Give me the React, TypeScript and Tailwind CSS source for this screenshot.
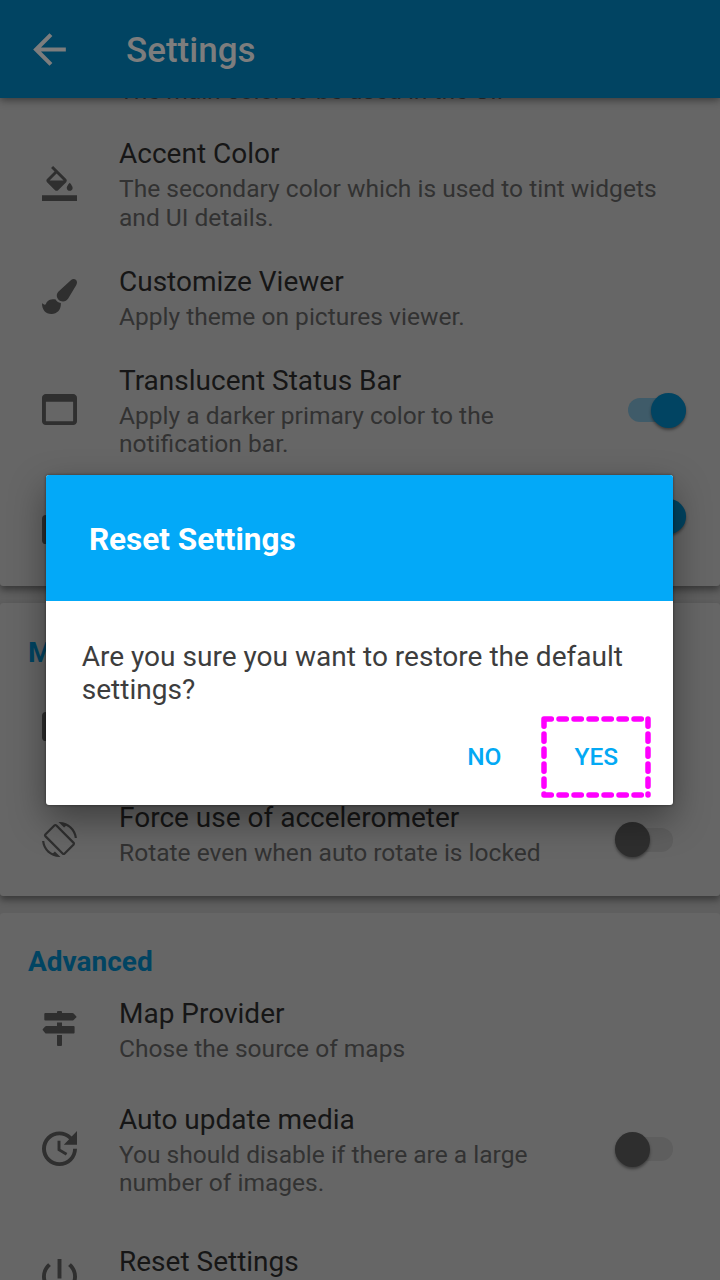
import React from "react";
import type { ReactNode } from "react";
import { MdArrowBack } from "react-icons/md";

function Glyph({ box, className, children }: { box: string; className: string; children: ReactNode }) {
  return (
    <svg viewBox={box} preserveAspectRatio="none" fill="currentColor" className={"block text-[#2f2f2f] " + className}>
      {children}
    </svg>
  );
}

const FillIcon = () => (
  <Glyph box="0 0 24 24" className="h-[35px] w-[35px]">
    <path d="M16.56 8.94L7.62 0 6.21 1.41l2.38 2.38-5.15 5.15c-.59.59-.59 1.54 0 2.12l5.5 5.5c.29.29.68.44 1.06.44s.77-.15 1.06-.44l5.5-5.5c.59-.58.59-1.53 0-2.12zM5.21 10L10 5.21 14.79 10H5.21zM19 11.5s-2 2.17-2 3.5c0 1.1.9 2 2 2s2-.9 2-2c0-1.33-2-3.5-2-3.5zM0 20h24v4H0z" />
  </Glyph>
);
const BrushIcon = () => (
  <Glyph box="0 0 35 35" className="mb-[2px] h-[35px] w-[35px]">
    <path d="M31.6 0C33.6 0 35 1.5 35 3.4c0 1-.5 2-1 3L26.2 19.600c-1.500 2-3 2.900-5.200 2.900-3.500 0-6.200-2.500-6.200-5.900 0-1.700.700-3.200 2.300-4.600L29.100 1c.8-.6 1.600-1 2.500-1zM13.700 20.400c.8 1.700 2.400 3.100 5.100 3.500l.1.900C18.900 31 15 35 9.600 35 3.200 35 0 30.300 0 24.200c.4.300 2 1.500 2.700 1.500.6 0 1-.3 1.200-.8 1.300-3.400 4.100-4.600 8.200-4.600z" />
  </Glyph>
);
const WindowIcon = () => (
  <Glyph box="3 4 18 16" className="h-[31px] w-[35px]">
    <path d="M19 4H5c-1.110 0-2 .9-2 2v12c0 1.100.89 2 2 2h14c1.100 0 2-.9 2-2V6c0-1.100-.89-2-2-2zm0 14H5V8h14v10z" />
  </Glyph>
);
const PanelIcon = () => (
  <Glyph box="0 0 35 30" className="h-[29px] w-[35px]">
    <path fillRule="evenodd" d="M4 0h27a4 4 0 0 1 4 4v22a4 4 0 0 1-4 4H4a4 4 0 0 1-4-4V4a4 4 0 0 1 4-4zm0 4v22h27V4z" />
  </Glyph>
);
const RotateIcon = () => (
  <Glyph box="0 0 24 24" className="mt-[12px] h-[35px] w-[35px]">
    <path d="M16.48 2.520c3.270 1.550 5.610 4.720 5.970 8.480h1.500C23.440 4.840 18.290 0 12 0l-.66.030 3.810 3.810 1.330-1.320zm-6.250-.770c-.59-.59-1.540-.59-2.120 0L1.750 8.110c-.59.59-.59 1.540 0 2.120l12.020 12.020c.59.59 1.540.59 2.120 0l6.360-6.360c.59-.59.59-1.540 0-2.120L10.230 1.750zm4.600 19.440L2.810 9.170l6.360-6.360 12.020 12.020-6.360 6.360zm-7.310.29C4.250 19.940 1.910 16.760 1.550 13H.05C.56 19.160 5.710 24 12 24l.66-.03-3.810-3.810-1.330 1.320z" />
  </Glyph>
);
const SignsIcon = () => (
  <Glyph box="0 0 35 35" className="mb-[2px] h-[35px] w-[35px]">
    <path d="M15 2V1q0-1 1-1h3q1 0 1 1v1h10.300q.8 0 1.300.6l2.600 2.700q.5.600 0 1.200L31.600 9q-.5.600-1.300.6H3.300q-1 0-1-1V3.200q0-1.200 1-1.200zM15 11.500h5V15h11.600q1 0 1 1v5.500q0 1-1 1H4.400q-.8 0-1.300-.6L.9 19.300q-.5-.600 0-1.200l2.200-2.500q.5-.6 1.300-.6H15zM15 24h5v10q0 1-1 1h-3q-1 0-1-1z" />
  </Glyph>
);
const UpdateIcon = () => (
  <Glyph box="3 3 18 18" className="h-[35px] w-[35px]">
    <path d="M21 10.120h-6.780l2.740-2.820c-2.730-2.700-7.150-2.800-9.880-.100-2.730 2.710-2.730 7.080 0 9.790s7.150 2.710 9.880 0C18.320 15.650 19 14.080 19 12.100h2c0 1.980-.88 4.550-2.640 6.290-3.510 3.480-9.210 3.480-12.720 0-3.500-3.470-3.530-9.110-.020-12.580s9.140-3.470 12.650 0L21 3v7.120zM12.500 8v4.250l3.500 2.080-.72 1.210L11 13V8h1.500z" />
  </Glyph>
);
const PowerIcon = () => (
  <Glyph box="3 3 18 18" className="h-[35px] w-[35px]">
    <path d="M13 3h-2v10h2V3zm4.830 2.170l-1.420 1.420C17.990 7.860 19 9.810 19 12c0 3.870-3.130 7-7 7s-7-3.130-7-7c0-2.190 1.010-4.140 2.580-5.420L6.170 5.170C4.230 6.820 3 9.260 3 12c0 4.970 4.030 9 9 9s9-4.030 9-9c0-2.740-1.230-5.180-3.170-6.830z" />
  </Glyph>
);

function Toggle({ on }: { on?: boolean }) {
  return on ? (
    <div className="mr-[34px] flex h-6 w-[58px] items-center justify-end rounded-full bg-[#3f5b69]">
      <div className="size-[35px] shrink-0 rounded-full bg-[#014462] shadow-[0_2px_3px_rgba(0,0,0,0.4)]" />
    </div>
  ) : (
    <div className="mr-[47px] flex h-6 w-[58px] items-center rounded-full bg-[#5e5e5e]">
      <div className="size-[35px] shrink-0 rounded-full bg-[#2e2e2e] shadow-[0_2px_3px_rgba(0,0,0,0.4)]" />
    </div>
  );
}

type RowProps = { icon: ReactNode; title: string; lines: string[]; className: string; toggle?: ReactNode };

function Row({ icon, title, lines, className, toggle }: RowProps) {
  return (
    <div className={"flex shrink-0 items-center " + className}>
      <div className="flex w-[119px] shrink-0 justify-center pb-[3px]">{icon}</div>
      <div className="flex-1 whitespace-nowrap">
        <div className="text-[28px] leading-[33px] text-[#161616]">{title}</div>
        <div className="mt-[5px] text-[24.550px] leading-[28.500px] text-[#323232]">
          {lines.map((l) => (
            <div key={l}>{l}</div>
          ))}
        </div>
      </div>
      {toggle && <div className="shrink-0 pb-[2px]">{toggle}</div>}
    </div>
  );
}

const card = "flex shrink-0 flex-col overflow-hidden bg-[#666666] ";
const heading = "pl-7 text-[28px] font-bold leading-[33px] text-[#014462]";

export default function App() {
  return (
    <div className="relative flex h-[1280px] w-[720px] flex-col overflow-hidden bg-[#5f5f5f] font-['Roboto',sans-serif]">
      <header className="z-10 flex h-[98px] shrink-0 items-center bg-[#014462] text-[#7d7d7d] shadow-[0_2px_8px_rgba(0,0,0,0.45)]">
        <MdArrowBack className="ml-[25px] size-[49px]" />
        <h1 className="ml-[52px] pt-[4px] text-[35px] font-medium leading-[42px]">Settings</h1>
      </header>

      <main className="flex min-h-0 flex-1 flex-col gap-[17px] overflow-hidden">
        <section className={card + "h-[488px] rounded-b-[3px] shadow-[0_4px_7px_rgba(0,0,0,0.4)]"}>
          <div className="flex h-6 shrink-0 flex-col justify-start overflow-hidden pl-[119px]">
            <div className="-mt-[21px] text-[24.550px] leading-[28px] text-[#323232]">The main color to be used in the UI.</div>
          </div>
          <Row className="h-[127px] pb-[2px]" icon={<FillIcon />} title="Accent Color" lines={["The secondary color which is used to tint widgets", "and UI details."]} />
          <Row className="h-[99px]" icon={<BrushIcon />} title="Customize Viewer" lines={["Apply theme on pictures viewer."]} />
          <Row className="h-[126px]" icon={<WindowIcon />} title="Translucent Status Bar" lines={["Apply a darker primary color to the", "notification bar."]} toggle={<Toggle on />} />
          <div className="flex h-[112px] justify-between">
            <div className="pl-[42px] pt-[41px]"><PanelIcon /></div>
            <div className="pt-[30px]"><Toggle on /></div>
          </div>
        </section>

        <section className={card + "h-[293px] rounded-[3px] shadow-[0_4px_7px_rgba(0,0,0,0.4)]"}>
          <h2 className={heading + " mt-[33px]"}>Media</h2>
          <div className="h-[118px] pl-[42px] pt-[43px]"><PanelIcon /></div>
          <Row className="h-[99px] pb-[4px]" icon={<RotateIcon />} title="Force use of accelerometer" lines={["Rotate even when auto rotate is locked"]} toggle={<div className="pt-[12px]"><Toggle /></div>} />
        </section>

        <section className={card + "h-[420px] rounded-[3px]"}>
          <h2 className={heading + " mt-[32px]"}>Advanced</h2>
          <Row className="h-[105px]" icon={<SignsIcon />} title="Map Provider" lines={["Chose the source of maps"]} />
          <Row className="h-[136px] pb-[2px]" icon={<UpdateIcon />} title="Auto update media" lines={["You should disable if there are a large", "number of images."]} toggle={<Toggle />} />
          <Row className="h-[114px] pt-[4px]" icon={<PowerIcon />} title="Reset Settings" lines={["Restore the default settings."]} />
        </section>
      </main>

      <div role="dialog" className="absolute left-[46.400px] top-[474.500px] z-20 flex h-[330px] w-[627px] flex-col overflow-hidden rounded-[3px] bg-white shadow-[0_14px_36px_rgba(0,0,0,0.4),0_0_3px_rgba(0,0,0,0.5)]">
        <div className="flex h-[126.500px] shrink-0 items-center bg-[#03a9f8] pl-[42.500px] pt-1 text-[31.500px] font-bold text-white">Reset Settings</div>
        <p className="pl-[35.300px] pt-[39px] text-[28.050px] leading-[33px] text-[#3d3d3d]">
          Are you sure you want to restore the default
          <br />
          settings?
        </p>
        <div className="flex items-center justify-end pr-[22px] pt-[10px] text-[24.500px] font-medium text-[#03a9f4]">
          <button className="mr-[40px]">NO</button>
          <button className="relative flex h-[83px] w-[110px] items-center justify-center">
            YES
            <svg viewBox="0 0 110 83" className="absolute inset-0 h-full w-full" fill="none" stroke="#ff00ff" strokeWidth="5.500" strokeLinecap="round" strokeDasharray="7.300 7.700">
              <path d="M3 3H107M3 3V79M3 79H107M107 3V79" />
            </svg>
          </button>
        </div>
      </div>
    </div>
  );
}
